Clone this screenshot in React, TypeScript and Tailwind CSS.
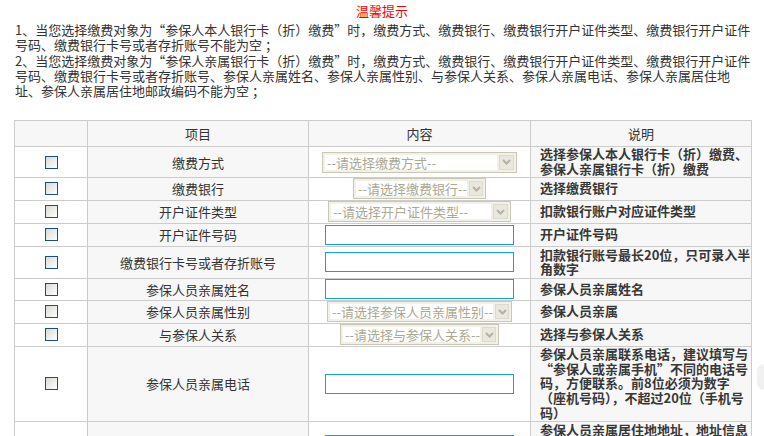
import React from 'react';

type Row = {
  item: string;
  kind: 'select' | 'input';
  width?: number;
  placeholder?: string;
  desc: string[];
  h: string;
};

const rows: Row[] = [
  { item: '缴费方式', kind: 'select', width: 195, placeholder: '--请选择缴费方式--', desc: ['选择参保人本人银行卡（折）缴费、', '参保人亲属银行卡（折）缴费'], h: 'h-[29px]' },
  { item: '缴费银行', kind: 'select', width: 133, placeholder: '--请选择缴费银行--', desc: ['选择缴费银行'], h: 'h-[23px]' },
  { item: '开户证件类型', kind: 'select', width: 183, placeholder: '--请选择开户证件类型--', desc: ['扣款银行账户对应证件类型'], h: 'h-[23px]' },
  { item: '开户证件号码', kind: 'input', desc: ['开户证件号码'], h: 'h-[23px]' },
  { item: '缴费银行卡号或者存折账号', kind: 'input', desc: ['扣款银行账号最长20位，只可录入半', '角数字'], h: 'h-[32px]' },
  { item: '参保人员亲属姓名', kind: 'input', desc: ['参保人员亲属姓名'], h: 'h-[22px]' },
  { item: '参保人员亲属性别', kind: 'select', width: 185, placeholder: '--请选择参保人员亲属性别--', desc: ['参保人员亲属'], h: 'h-[23px]' },
  { item: '与参保人关系', kind: 'select', width: 159, placeholder: '--请选择与参保人关系--', desc: ['选择与参保人关系'], h: 'h-[23px]' },
  {
    item: '参保人员亲属电话',
    kind: 'input',
    desc: [
      '参保人员亲属联系电话，建议填写与',
      '“参保人或亲属手机”不同的电话号',
      '码，方便联系。前8位必须为数字',
      '（座机号码），不超过20位（手机号',
      '码）',
    ],
    h: 'h-[75px]',
  },
  { item: '参保人员亲属居住地址', kind: 'input', desc: ['参保人员亲属居住地地址，地址信息', '请详细填写到门牌号', '（不超过50个汉字）'], h: 'h-[48px]' },
];

function FakeSelect({ width, text }: { width: number; text: string }) {
  return (
    <div
      className="mx-auto flex h-[21px] items-stretch gap-[2px] border border-[#cac7b7] bg-[#f2f1e8] p-[2px]"
      style={{ width }}
    >
      <div className="flex flex-1 items-center whitespace-nowrap bg-white pl-[2px] text-left text-[13px] leading-[15px] text-[#aba894]">
        {text}
      </div>
      <div className="flex w-[15px] items-center justify-center border border-[#dcdacf] bg-[#e9e7de]">
        <svg width="9" height="6" viewBox="0 0 9 6">
          <path d="M1 1 L4.5 4.5 L8 1" fill="none" stroke="#b4b2a6" strokeWidth="2" />
        </svg>
      </div>
    </div>
  );
}

function Checkbox() {
  return (
    <div className="mx-auto h-[13px] w-[13px] border border-[#1d4f7e] bg-gradient-to-br from-[#d9d9d4] to-white" />
  );
}

export default function App() {
  return (
    <div className="relative h-[436px] overflow-hidden bg-white text-[#333] font-['Noto_Sans_CJK_SC',sans-serif]">
      {/* 温馨提示 */}
      <div className="text-center text-[13px] leading-[22px] text-[#ff0000]">温馨提示</div>
      <div className="pl-[15px] text-[13px] leading-[15.3px] whitespace-nowrap">
        <div>1、当您选择缴费对象为“参保人本人银行卡（折）缴费”时，缴费方式、缴费银行、缴费银行开户证件类型、缴费银行开户证件</div>
        <div>号码、缴费银行卡号或者存折账号不能为空 ；</div>
        <div>2、当您选择缴费对象为“参保人亲属银行卡（折）缴费”时，缴费方式、缴费银行、缴费银行开户证件类型、缴费银行开户证件</div>
        <div>号码、缴费银行卡号或者存折账号、参保人亲属姓名、参保人亲属性别、与参保人关系、参保人亲属电话、参保人亲属居住地</div>
        <div>址、参保人亲属居住地邮政编码不能为空 ；</div>
      </div>

      <table className="ml-[14px] mt-[22px] w-[737px] table-fixed border-collapse text-[13px]">
        <colgroup>
          <col className="w-[73px]" />
          <col className="w-[221px]" />
          <col className="w-[222px]" />
          <col className="w-[221px]" />
        </colgroup>
        <thead>
          <tr className="h-[26px] bg-[#f7f7f7]">
            <th className="border border-[#cccccc] p-0 font-normal" />
            <th className="border border-[#cccccc] p-0 font-normal">项目</th>
            <th className="border border-[#cccccc] p-0 font-normal">内容</th>
            <th className="border border-[#cccccc] p-0 font-normal">说明</th>
          </tr>
        </thead>
        <tbody>
          {rows.map((r) => (
            <tr key={r.item} className={r.h}>
              <td className="border border-[#cccccc] bg-white p-0 align-middle">
                <Checkbox />
              </td>
              <td className="border border-[#cccccc] bg-[#f7f7f7] p-0 text-center leading-[15px]">{r.item}</td>
              <td className="border border-[#cccccc] bg-white p-0 text-center">
                {r.kind === 'select' ? (
                  <FakeSelect width={r.width ?? 180} text={r.placeholder ?? ''} />
                ) : (
                  <input type="text" className="mx-auto block h-[20px] w-[189px] border border-[#13a1dc] bg-white outline-none" />
                )}
              </td>
              <td className="border border-[#cccccc] bg-[#f7f7f7] py-0 pl-[9px] pr-[2px] font-bold leading-[14.6px] text-[#383838] whitespace-nowrap">
                {r.desc.map((line) => (
                  <div key={line}>{line}</div>
                ))}
              </td>
            </tr>
          ))}
        </tbody>
      </table>

      {/* faint floating edge on the right */}
      <div className="pointer-events-none absolute right-0 top-[364px] h-[26px] w-[7px] rounded-l-full bg-[#f1f1f1]" />
    </div>
  );
}
